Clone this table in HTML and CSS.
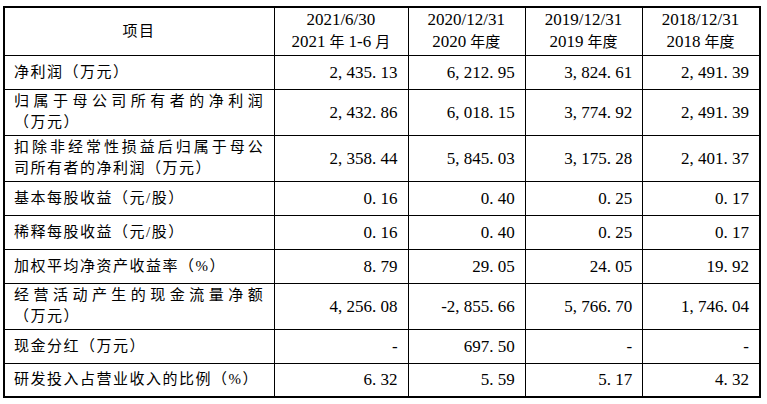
FILE: index.html
```html
<!DOCTYPE html>
<html lang="zh-CN">
<head>
<meta charset="utf-8">
<title>主要财务数据</title>
<link rel="stylesheet" href="styles.css">
</head>
<body>
<table class="fin">
  <colgroup>
    <col class="c-item">
    <col class="c-wide">
    <col class="c-year">
    <col class="c-year">
    <col class="c-year">
  </colgroup>
  <thead>
    <tr class="head">
      <th class="item-head">项目</th>
      <th><span class="hn">2021/6/30</span><br><span class="hn gap">2021</span>年<span class="hn gap2">1-6</span>月</th>
      <th><span class="hn">2020/12/31</span><br><span class="hn gap">2020</span>年度</th>
      <th><span class="hn">2019/12/31</span><br><span class="hn gap">2019</span>年度</th>
      <th><span class="hn">2018/12/31</span><br><span class="hn gap">2018</span>年度</th>
    </tr>
  </thead>
  <tbody>
    <tr class="single">
      <td class="item">净利润（万元）</td>
      <td class="num">2<span class="sep">,</span>435<span class="sep">.</span>13</td>
      <td class="num">6<span class="sep">,</span>212<span class="sep">.</span>95</td>
      <td class="num">3<span class="sep">,</span>824<span class="sep">.</span>61</td>
      <td class="num">2<span class="sep">,</span>491<span class="sep">.</span>39</td>
    </tr>
    <tr class="double">
      <td class="item"><span class="j">归属于母公司所有者的净利润</span>（万元）</td>
      <td class="num">2<span class="sep">,</span>432<span class="sep">.</span>86</td>
      <td class="num">6<span class="sep">,</span>018<span class="sep">.</span>15</td>
      <td class="num">3<span class="sep">,</span>774<span class="sep">.</span>92</td>
      <td class="num">2<span class="sep">,</span>491<span class="sep">.</span>39</td>
    </tr>
    <tr class="double">
      <td class="item"><span class="j">扣除非经常性损益后归属于母公</span>司所有者的净利润（万元）</td>
      <td class="num">2<span class="sep">,</span>358<span class="sep">.</span>44</td>
      <td class="num">5<span class="sep">,</span>845<span class="sep">.</span>03</td>
      <td class="num">3<span class="sep">,</span>175<span class="sep">.</span>28</td>
      <td class="num">2<span class="sep">,</span>401<span class="sep">.</span>37</td>
    </tr>
    <tr class="single">
      <td class="item">基本每股收益（元/股）</td>
      <td class="num">0<span class="sep">.</span>16</td>
      <td class="num">0<span class="sep">.</span>40</td>
      <td class="num">0<span class="sep">.</span>25</td>
      <td class="num">0<span class="sep">.</span>17</td>
    </tr>
    <tr class="single">
      <td class="item">稀释每股收益（元/股）</td>
      <td class="num">0<span class="sep">.</span>16</td>
      <td class="num">0<span class="sep">.</span>40</td>
      <td class="num">0<span class="sep">.</span>25</td>
      <td class="num">0<span class="sep">.</span>17</td>
    </tr>
    <tr class="single">
      <td class="item">加权平均净资产收益率（%）</td>
      <td class="num">8<span class="sep">.</span>79</td>
      <td class="num">29<span class="sep">.</span>05</td>
      <td class="num">24<span class="sep">.</span>05</td>
      <td class="num">19<span class="sep">.</span>92</td>
    </tr>
    <tr class="double">
      <td class="item"><span class="j">经营活动产生的现金流量净额</span>（万元）</td>
      <td class="num">4<span class="sep">,</span>256<span class="sep">.</span>08</td>
      <td class="num">-2<span class="sep">,</span>855<span class="sep">.</span>66</td>
      <td class="num">5<span class="sep">,</span>766<span class="sep">.</span>70</td>
      <td class="num">1<span class="sep">,</span>746<span class="sep">.</span>04</td>
    </tr>
    <tr class="single">
      <td class="item">现金分红（万元）</td>
      <td class="num">-</td>
      <td class="num">697<span class="sep">.</span>50</td>
      <td class="num">-</td>
      <td class="num">-</td>
    </tr>
    <tr class="single">
      <td class="item">研发投入占营业收入的比例（%）</td>
      <td class="num">6<span class="sep">.</span>32</td>
      <td class="num">5<span class="sep">.</span>59</td>
      <td class="num">5<span class="sep">.</span>17</td>
      <td class="num">4<span class="sep">.</span>32</td>
    </tr>
  </tbody>
</table>
</body>
</html>
```

FILE: styles.css
```css
html, body {
  margin: 0;
  background: #fff;
}

body {
  padding: 6px 0 0 3px;
  color: #000;
}

.fin {
  border-collapse: collapse;
  table-layout: fixed;
  width: 758px;
  border: 2px solid #000;
  font-family: "Liberation Serif", "Noto Sans CJK SC", serif;
  font-size: 15px;
  line-height: 21px;
}

.c-item { width: 270px; }
.c-wide { width: 133px; }
.c-year { width: 117px; }

.fin th,
.fin td {
  border: 1px solid #000;
  padding: 0 10px 0 9px;
  vertical-align: middle;
  font-weight: normal;
}

.fin th {
  text-align: center;
  line-height: 21px;
}

.item-head {
  letter-spacing: 1.5px;
}

.hn {
  font-size: 17px;
}

.gap { margin-right: 4px; }
.gap2 { margin: 0 4px; }

.item {
  letter-spacing: 1.5px;
  text-align: left;
  padding-right: 7px;
}

.j {
  display: block;
  text-align: justify;
  text-align-last: justify;
}

.num {
  text-align: right;
  font-size: 17px;
}

.sep {
  margin-right: 0.25em;
}

.head { height: 48px; }
.single { height: 34px; }
.double { height: 46px; }
```
